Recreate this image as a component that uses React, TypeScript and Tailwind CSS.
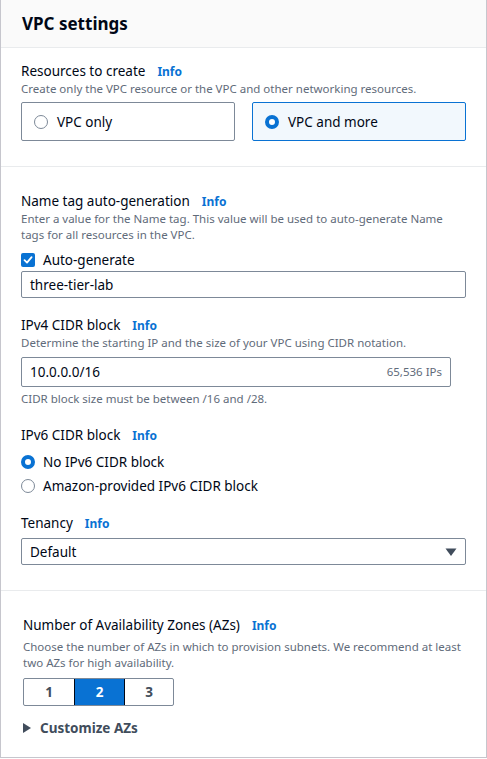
import React from "react";

const Info = () => (
  <span className="ml-[12px] text-[12px] font-bold leading-[16px] text-[#0972d3]">Info</span>
);

const Label = ({ children }: { children: React.ReactNode }) => (
  <div className="flex h-[20px] items-baseline text-[13.5px] leading-[20px] text-[#000716]">
    <span>{children}</span>
    <Info />
  </div>
);

const Desc = ({ children }: { children: React.ReactNode }) => (
  <div className="text-[11.5px] leading-[16px] text-[#5f6b7a]">{children}</div>
);

const Radio = ({ checked }: { checked?: boolean }) =>
  checked ? (
    <span className="box-border inline-block h-[14px] w-[14px] shrink-0 rounded-full border-[4px] border-[#0972d3] bg-white" />
  ) : (
    <span className="box-border inline-block h-[14px] w-[14px] shrink-0 rounded-full border-[1.5px] border-[#7d8998] bg-white" />
  );

export default function App() {
  return (
    <div
      className="w-[487px] h-[759px] bg-white"
      style={{ fontFamily: "'Noto Sans', 'Open Sans', Arial, sans-serif" }}
    >
      <div className="box-border h-[758px] border-x border-b border-[#c6c6cd] bg-white">
        <div className="flex h-[48px] items-center border-b border-[#e9ebed] bg-[#fafafa] px-[21px]">
          <h2 className="text-[17px] font-bold leading-[22px] text-[#000716]">VPC settings</h2>
        </div>

        <div className="border-b border-[#e9ebed] px-[20px] pb-[25px] pt-[13px]">
          <Label>Resources to create</Label>
          <div className="mt-0">
            <Desc>Create only the VPC resource or the VPC and other networking resources.</Desc>
          </div>
          <div className="mt-[5px] grid grid-cols-2 gap-[17px]">
            <div className="box-border flex h-[39px] items-center gap-[9px] rounded-[2px] border border-[#7d8998] bg-white px-[12px] text-[13.5px] leading-[20px] text-[#000716]">
              <Radio />
              <span>VPC only</span>
            </div>
            <div className="box-border flex h-[39px] items-center gap-[9px] rounded-[2px] border border-[#0972d3] bg-[#f2f8fd] px-[12px] text-[13.5px] leading-[20px] text-[#000716]">
              <Radio checked />
              <span>VPC and more</span>
            </div>
          </div>
        </div>

        <div className="border-b border-[#e9ebed] px-[20px] pb-[25px] pt-[24px]">
          <Label>Name tag auto-generation</Label>
          <div className="mt-0">
            <Desc>Enter a value for the Name tag. This value will be used to auto-generate Name tags for all resources in the VPC.</Desc>
          </div>
          <div className="mt-[8px] flex h-[18px] items-center gap-[8px] text-[13.5px] leading-[18px] text-[#000716]">
            <span className="flex h-[14px] w-[14px] items-center justify-center rounded-[2px] bg-[#0972d3]">
              <svg width="10" height="10" viewBox="0 0 10 10" fill="none">
                <path d="M1.5 5.2 L4 7.6 L8.6 2.2" stroke="white" strokeWidth="1.8" strokeLinecap="round" strokeLinejoin="round" />
              </svg>
            </span>
            <span>Auto-generate</span>
          </div>
          <div className="mt-[2px] box-border flex h-[27px] items-center rounded-[2px] border border-[#7d8998] px-[8px] text-[13.5px] leading-[20px] text-[#000716]">
            three-tier-lab
          </div>

          <div className="mt-[17px]">
            <Label>IPv4 CIDR block</Label>
          </div>
          <div className="mt-0">
            <Desc>Determine the starting IP and the size of your VPC using CIDR notation.</Desc>
          </div>
          <div className="mt-[6px] box-border flex h-[30px] w-[430px] items-center justify-between rounded-[2px] border border-[#7d8998] px-[8px] text-[13.5px] leading-[20px] text-[#000716]">
            <span>10.0.0.0/16</span>
            <span className="text-[11.5px] text-[#5f6b7a]">65,536 IPs</span>
          </div>
          <div className="mt-[4px]">
            <Desc>CIDR block size must be between /16 and /28.</Desc>
          </div>

          <div className="mt-[18px]">
            <Label>IPv6 CIDR block</Label>
          </div>
          <div className="mt-[8px] flex h-[18px] items-center gap-[8px] text-[13.5px] leading-[18px] text-[#000716]">
            <Radio checked />
            <span>No IPv6 CIDR block</span>
          </div>
          <div className="mt-[6px] flex h-[18px] items-center gap-[8px] text-[13.5px] leading-[18px] text-[#000716]">
            <Radio />
            <span>Amazon-provided IPv6 CIDR block</span>
          </div>

          <div className="mt-[18px]">
            <Label>Tenancy</Label>
          </div>
          <div className="mt-[5px] box-border flex h-[27px] items-center justify-between rounded-[2px] border border-[#7d8998] px-[8px] text-[13.5px] leading-[20px] text-[#000716]">
            <span>Default</span>
            <svg width="12" height="10" viewBox="0 0 12 10">
              <path d="M0.5 1.5 H11.5 L6 9 Z" fill="#414d5c" />
            </svg>
          </div>
        </div>

        <div className="px-[22px] pt-[24px]">
          <Label>Number of Availability Zones (AZs)</Label>
          <div className="mt-[4px]">
            <Desc>Choose the number of AZs in which to provision subnets. We recommend at least two AZs for high availability.</Desc>
          </div>
          <div className="mt-[7px] box-border flex h-[28px] w-[151px] overflow-hidden rounded-[2px] border border-[#7d8998] text-[13.5px] font-bold leading-[20px]">
            <div className="flex w-[50px] items-center justify-center text-[#414d5c]">1</div>
            <div className="flex w-[51px] items-center justify-center border-x border-[#000716] bg-[#0972d3] text-white">2</div>
            <div className="flex flex-1 items-center justify-center text-[#414d5c]">3</div>
          </div>
          <div className="mt-[12px] flex h-[20px] items-center gap-[9px] text-[13.5px] font-bold leading-[20px] text-[#414d5c]">
            <svg width="8" height="10" viewBox="0 0 8 10">
              <path d="M0 0 L8 5 L0 10 Z" fill="#414d5c" />
            </svg>
            <span>Customize AZs</span>
          </div>
        </div>
      </div>
    </div>
  );
}
